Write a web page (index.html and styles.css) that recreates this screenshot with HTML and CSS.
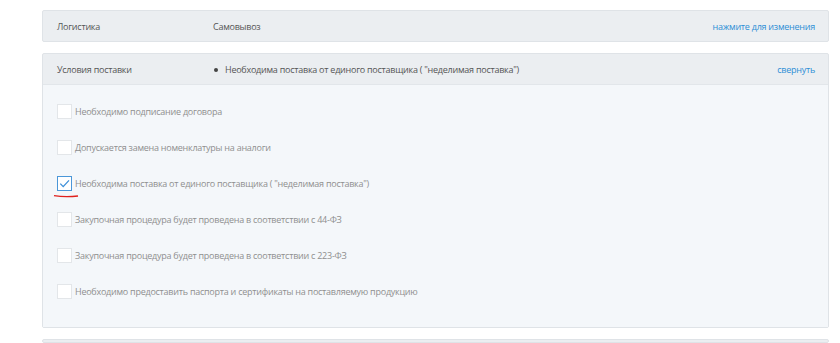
FILE: index.html
```html
<!DOCTYPE html>
<html lang="ru">
<head>
  <meta charset="UTF-8">
  <title>Условия поставки</title>
  <link rel="stylesheet" href="styles.css">
</head>
<body>
  <div class="container">
    <div class="panel">
      <div class="panel-head">
        <span class="label">Логистика</span>
        <span class="value">Самовывоз</span>
        <a class="action" href="#">нажмите для изменения</a>
      </div>
    </div>

    <div class="panel">
      <div class="panel-head">
        <span class="label">Условия поставки</span>
        <ul class="value selected">
          <li>Необходима поставка от единого поставщика ( "неделимая поставка")</li>
        </ul>
        <a class="action" href="#">свернуть</a>
      </div>
      <div class="panel-body">
        <label class="option"><span class="box"></span>Необходимо подписание договора</label>
        <label class="option"><span class="box"></span>Допускается замена номенклатуры на аналоги</label>
        <label class="option checked">
          <span class="box">
            <svg width="13" height="13" viewBox="0 0 13 13"><path d="M2.3 6.6 L5.2 9.6 L11 3.4" fill="none" stroke="#3d8fd8" stroke-width="1.3"/></svg>
          </span>Необходима поставка от единого поставщика ( "неделимая поставка")
          <svg class="mark" width="26" height="5" viewBox="0 0 26 5"><path d="M1 1.6 C8 2.8 16 3 25 2" fill="none" stroke="#e0201c" stroke-width="1.3"/></svg>
        </label>
        <label class="option"><span class="box"></span>Закупочная процедура будет проведена в соответствии с 44-ФЗ</label>
        <label class="option"><span class="box"></span>Закупочная процедура будет проведена в соответствии с 223-ФЗ</label>
        <label class="option"><span class="box"></span>Необходимо предоставить паспорта и сертификаты на поставляемую продукцию</label>
      </div>
    </div>

    <div class="panel last"></div>
  </div>
</body>
</html>
```

FILE: styles.css
```css
body {
  font-family: "Open Sans", Arial, sans-serif;
  font-size: 9px;
  letter-spacing: -0.25px;
  background-color: #ffffff;
  margin: 0;
  padding: 10px 0 0 0;
}
.container {
  width: 787px;
  margin-left: 42px;
}
.panel {
  background-color: #ebeef1;
  border: 1px solid #dfe3e7;
  border-radius: 2px;
  margin-bottom: 11px;
}
.panel.last {
  height: 2px;
  margin-bottom: 0;
}
.panel-head {
  display: flex;
  align-items: center;
  height: 30px;
  padding: 0 13px 0 14px;
  color: #555;
}
.label {
  width: 156px;
}
.value {
  flex: 1;
  margin: 0;
  padding: 0;
}
.selected li {
  list-style: none;
  position: relative;
  padding-left: 12px;
}
.selected li::before {
  content: "";
  position: absolute;
  left: 1px;
  top: 5px;
  width: 4px;
  height: 4px;
  border-radius: 50%;
  background-color: #444;
}
.action {
  color: #2d8ed6;
  text-decoration: none;
}
.panel-body {
  background-color: #f4f7fa;
  border-top: 1px solid #e2e6ea;
  padding: 19px 14px 28px;
  display: flex;
  flex-direction: column;
  gap: 21px;
}
.option {
  position: relative;
  display: flex;
  align-items: center;
  height: 15px;
  color: #8f8f8f;
}
.box {
  width: 13px;
  height: 13px;
  border: 1px solid #e3e6e9;
  background-color: #ffffff;
  margin-right: 3px;
  display: flex;
}
.checked .box {
  border-color: #4b97d8;
}
.mark {
  position: absolute;
  left: -4px;
  top: 18px;
}
```
